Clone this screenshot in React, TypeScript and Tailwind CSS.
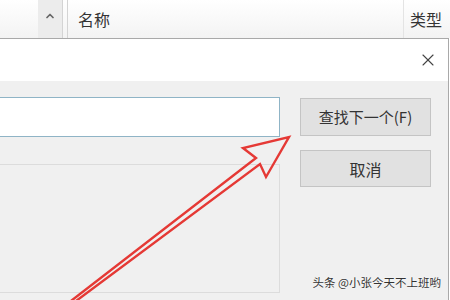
import { X, ChevronUp } from 'lucide-react'

const App = () => {
    return (
        <div className="relative w-[450px] h-[300px] overflow-hidden bg-white font-['Noto_Sans_CJK_SC',sans-serif] text-[#222]">
            {/* Column header of the explorer behind */}
            <div className="flex h-[38px] bg-gradient-to-b from-white to-[#f3f3f3]">
                <div className="w-[38px]" />
                <div className="w-[24px] flex items-start justify-center pt-[10px] bg-[#ececec]">
                    <ChevronUp size={12} strokeWidth={3.5} className="text-[#666]" />
                </div>
                <div className="w-[6px] border-l border-r border-[#d4d4d4]" />
                <div className="flex-1 flex items-center pl-[10px] text-[16px] text-[#333]">名称</div>
                <div className="w-[47px] flex items-center pl-[6px] border-l border-[#e4e4e4] text-[16px] text-[#333]">类型</div>
            </div>

            {/* Find dialog */}
            <div className="flex flex-col h-[262px] w-[449px] border-t border-r border-[#a9a9a9]">
                <div className="h-[42px] bg-white flex items-center justify-end pr-[10px]">
                    <X size={20} strokeWidth={1.3} className="text-[#444]" />
                </div>
                <div className="flex-1 flex bg-[#f0f0f0]">
                    <div className="w-[280px] flex flex-col pt-[16px]">
                        <div className="h-[40px] w-[280px] bg-white border border-[#8fb4c6] border-l-0" />
                        <div className="mt-[27px] h-[129px] border-t border-r border-b border-[#dcdcdc]" />
                    </div>
                    <div className="flex flex-col gap-[14px] pl-[20px] pt-[17px]">
                        <button className="w-[131px] h-[38px] bg-[#e1e1e1] border border-[#c4c4c4] text-[15px] text-[#333]">
                            查找下一个(F)
                        </button>
                        <button className="w-[131px] h-[37px] bg-[#e1e1e1] border border-[#c4c4c4] text-[16px] text-[#333]">
                            取消
                        </button>
                    </div>
                </div>
            </div>

            {/* Red annotation arrow */}
            <svg className="absolute inset-0 pointer-events-none" width="450" height="300" viewBox="0 0 450 300">
                <polygon
                    points="67,304 256,158 243,148 289,137 266,177 260,164 72,304"
                    fill="none"
                    stroke="#e53935"
                    strokeWidth="2.4"
                    strokeLinejoin="miter"
                />
            </svg>

            {/* Watermark */}
            <div className="absolute right-[9px] bottom-[9px] text-[11.5px] text-[#333] [text-shadow:0_0_2px_#fff]">
                头条 @小张今天不上班哟
            </div>
        </div>
    )
}

export default App
